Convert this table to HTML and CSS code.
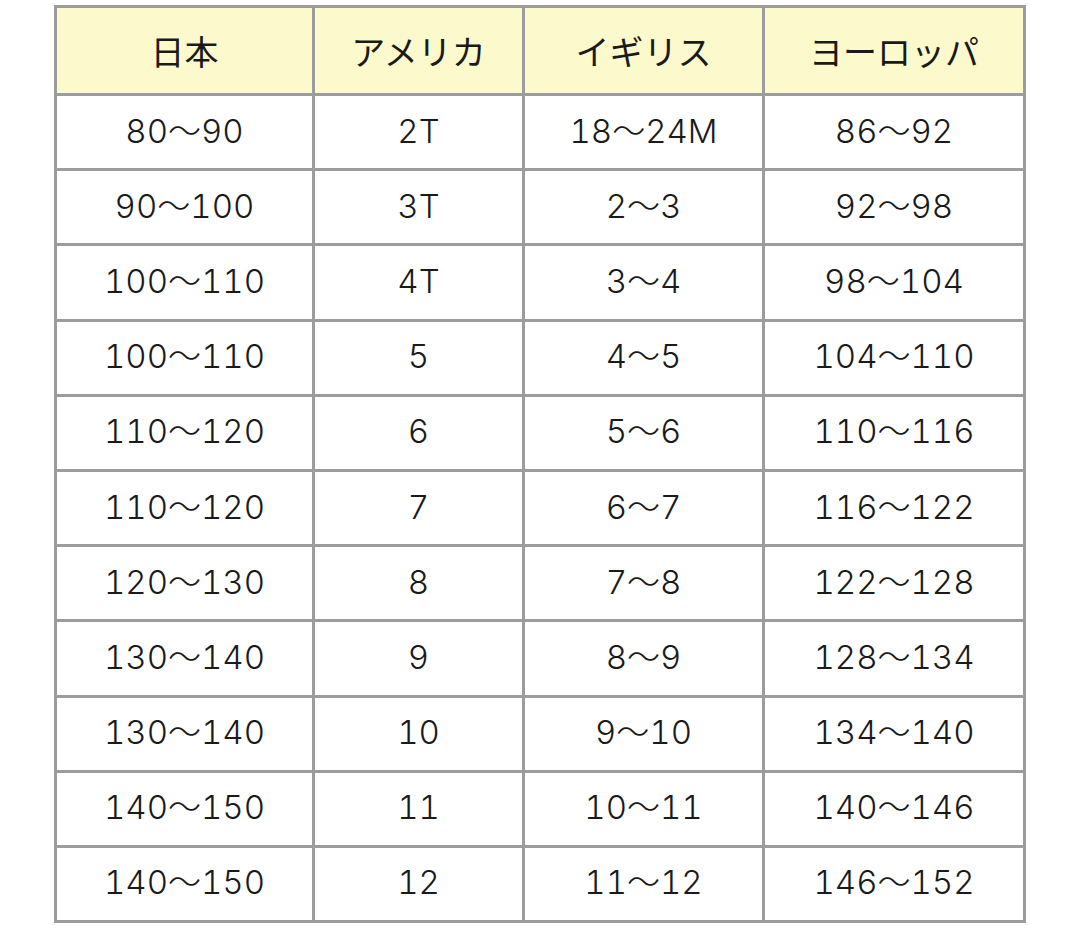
FILE: index.html
```html
<!DOCTYPE html>
<html lang="ja">
<head>
<meta charset="utf-8">
<title>サイズ表</title>
<link rel="stylesheet" href="styles.css">
</head>
<body>
<div class="page">
  <div class="size-table">
    <div class="cell head">日本</div>
    <div class="cell head">アメリカ</div>
    <div class="cell head">イギリス</div>
    <div class="cell head">ヨーロッパ</div>

    <div class="cell">80〜90</div><div class="cell">2T</div><div class="cell">18〜24M</div><div class="cell">86〜92</div>
    <div class="cell">90〜100</div><div class="cell">3T</div><div class="cell">2〜3</div><div class="cell">92〜98</div>
    <div class="cell">100〜110</div><div class="cell">4T</div><div class="cell">3〜4</div><div class="cell">98〜104</div>
    <div class="cell">100〜110</div><div class="cell">5</div><div class="cell">4〜5</div><div class="cell">104〜110</div>
    <div class="cell">110〜120</div><div class="cell">6</div><div class="cell">5〜6</div><div class="cell">110〜116</div>
    <div class="cell">110〜120</div><div class="cell">7</div><div class="cell">6〜7</div><div class="cell">116〜122</div>
    <div class="cell">120〜130</div><div class="cell">8</div><div class="cell">7〜8</div><div class="cell">122〜128</div>
    <div class="cell">130〜140</div><div class="cell">9</div><div class="cell">8〜9</div><div class="cell">128〜134</div>
    <div class="cell">130〜140</div><div class="cell">10</div><div class="cell">9〜10</div><div class="cell">134〜140</div>
    <div class="cell">140〜150</div><div class="cell">11</div><div class="cell">10〜11</div><div class="cell">140〜146</div>
    <div class="cell">140〜150</div><div class="cell">12</div><div class="cell">11〜12</div><div class="cell">146〜152</div>
  </div>
</div>
</body>
</html>
```

FILE: styles.css
```css
html, body {
  margin: 0;
  padding: 0;
  background: #ffffff;
}

.page {
  padding: 5px 0 0 54px;
}

.size-table {
  display: grid;
  width: 972px;
  box-sizing: border-box;
  grid-template-columns: 255px 207px 237px 258px;
  grid-template-rows: 85px repeat(11, 72.2px);
  gap: 3px;
  padding: 3px;
  background: #9c9c9c;
  font-family: "Inter", "Noto Sans CJK JP", sans-serif;
  font-size: 33px;
  font-weight: 300;
  font-variant-numeric: tabular-nums;
  color: #1a1a1a;
}

.cell {
  display: flex;
  align-items: center;
  justify-content: center;
  background: #ffffff;
  line-height: 1;
  padding-bottom: 2px;
}

.cell.head {
  background: #fcf9cc;
  font-family: "Noto Sans CJK JP", sans-serif;
  font-size: 34px;
  font-weight: 400;
  padding-bottom: 0;
}
```
